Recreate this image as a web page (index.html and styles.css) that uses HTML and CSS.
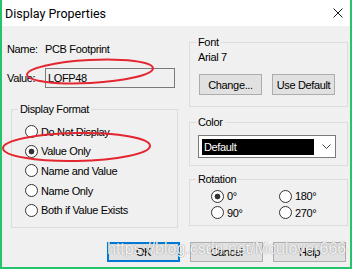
FILE: index.html
```html
<!DOCTYPE html>
<html>
<head>
<meta charset="utf-8">
<title>Display Properties</title>
<link rel="stylesheet" href="styles.css">
</head>
<body>
<div class="window">
  <div class="titlebar">
    <span class="title">Display Properties</span>
    <svg class="close" width="10" height="10" viewBox="0 0 10 10"><path d="M0.5 0.5 L9.5 9.5 M9.5 0.5 L0.5 9.5" stroke="#1a1a1a" stroke-width="1" fill="none"/></svg>
  </div>
  <div class="content">
    <div class="main">
      <div class="left">
        <div class="row name-row"><span class="lbl">Name:</span><span>PCB Footprint</span></div>
        <div class="row value-row"><span class="lbl">Value:</span><div class="input">LQFP48</div></div>
        <fieldset class="group format">
          <legend>Display Format</legend>
          <div class="radios">
            <div class="opt"><span class="radio"></span><span>Do Not Display</span></div>
            <div class="opt"><span class="radio on"></span><span>Value Only</span></div>
            <div class="opt"><span class="radio"></span><span>Name and Value</span></div>
            <div class="opt"><span class="radio"></span><span>Name Only</span></div>
            <div class="opt"><span class="radio"></span><span>Both if Value Exists</span></div>
          </div>
        </fieldset>
      </div>
      <div class="right">
        <fieldset class="group font">
          <legend>Font</legend>
          <div class="font-name">Arial 7</div>
          <div class="font-btns"><button class="btn small">Change...</button><button class="btn small">Use Default</button></div>
        </fieldset>
        <fieldset class="group color">
          <legend>Color</legend>
          <div class="combo"><span class="sel">Default</span><svg class="chev" width="9" height="5" viewBox="0 0 9 5"><path d="M0.5 0.5 L4.5 4.5 L8.5 0.5" stroke="#444" stroke-width="1" fill="none"/></svg></div>
        </fieldset>
        <fieldset class="group rotation">
          <legend>Rotation</legend>
          <div class="rot-grid">
            <div class="opt"><span class="radio on"></span><span>0°</span></div>
            <div class="opt"><span class="radio"></span><span>180°</span></div>
            <div class="opt"><span class="radio"></span><span>90°</span></div>
            <div class="opt"><span class="radio"></span><span>270°</span></div>
          </div>
        </fieldset>
      </div>
    </div>
    <div class="buttons">
      <button class="btn dlg focus">OK</button>
      <button class="btn dlg">Cancel</button>
      <button class="btn dlg">Help</button>
    </div>
  </div>
  <div class="watermark">https://blog.csdn.net/Mculover666</div>
  <svg class="marks" width="353" height="269" viewBox="0 0 353 269">
    <ellipse cx="90" cy="71.5" rx="63" ry="11.5" transform="rotate(-3 90 71.5)" fill="none" stroke="#e42631" stroke-width="2"/>
    <ellipse cx="76.5" cy="147" rx="73.5" ry="14" transform="rotate(-1 76.5 147)" fill="none" stroke="#e42631" stroke-width="2"/>
  </svg>
</div>
</body>
</html>
```
FILE: styles.css
```css
* { box-sizing: border-box; }
html, body { margin: 0; padding: 0; background: #fff; }
body {
  width: 353px;
  height: 269px;
  overflow: hidden;
  font-family: "Liberation Sans", Arial, sans-serif;
  font-size: 11px;
  letter-spacing: -0.35px;
  color: #000;
}
.window {
  position: relative;
  width: 352px;
  height: 269px;
  background: #f0f0f0;
  border-left: 2px solid #23c46c;
  border-right: 2px solid #23c46c;
  border-bottom: 2px solid #23c46c;
  display: flex;
  flex-direction: column;
}
.titlebar {
  height: 26px;
  flex: none;
  background: #fff;
  display: flex;
  align-items: center;
  padding-left: 3px;
  padding-right: 7px;
}
.title {
  font-family: Roboto, "Noto Sans", sans-serif;
  font-size: 12.5px;
  letter-spacing: 0;
  flex: 1;
}
.close { display: block; }
.content { flex: 1; display: flex; flex-direction: column; }
.main { display: flex; padding-left: 5px; gap: 11px; }
.left { width: 171px; padding-top: 16px; display: flex; flex-direction: column; }
.right { width: 159px; padding-top: 9px; display: flex; flex-direction: column; }
.row { display: flex; align-items: center; line-height: 14px; }
.name-row { height: 14px; }
.value-row { height: 20px; margin-top: 12px; }
.lbl { width: 38px; flex: none; }
.input {
  width: 130px;
  height: 20px;
  border: 1px solid #7a7a7a;
  background: #f0f0f0;
  padding-left: 2px;
  line-height: 18px;
}
.group {
  margin: 0;
  padding: 0;
  border: 1px solid #dcdcdc;
  min-width: 0;
}
.group legend {
  padding: 0 2px;
  margin-left: 6px;
  line-height: 14px;
}
.format { margin-top: 14px; margin-left: 4px; width: 167px; height: 126px; }
.radios { padding: 6px 0 0 13px; }
.opt { display: flex; align-items: center; height: 19.6px; line-height: 14px; white-space: nowrap; }
.radio {
  width: 13px;
  height: 13px;
  flex: none;
  border: 1px solid #333;
  border-radius: 50%;
  background: #fff;
  margin-right: 3px;
}
.radio.on { background: radial-gradient(circle, #333 0 2.6px, #fff 3.2px); }
.font { height: 72px; }
.font-name { padding: 1px 0 0 8px; line-height: 14px; }
.font-btns { display: flex; gap: 10px; padding-left: 9px; margin-top: 10px; }
.btn {
  font-family: inherit;
  font-size: 11px;
  letter-spacing: -0.35px;
  color: #000;
  background: #e1e1e1;
  border: 1px solid #adadad;
  padding: 0;
  margin: 0;
  line-height: 14px;
  white-space: nowrap;
}
.btn.small { width: 63px; height: 21px; }
.color { margin-top: 8px; height: 51px; }
.combo {
  margin: 6px 0 0 8px;
  width: 138px;
  height: 23px;
  border: 1px solid #7a7a7a;
  background: #fff;
  padding: 3px;
  display: flex;
  align-items: center;
}
.sel {
  width: 112px;
  height: 16px;
  background: #000;
  color: #fff;
  padding-left: 2px;
  line-height: 16px;
}
.chev { margin-left: 8px; }
.rotation { margin-top: 6px; height: 54px; }
.rot-grid {
  display: grid;
  grid-template-columns: 68px 68px;
  grid-auto-rows: 16.5px;
  padding: 2px 0 0 21px;
}
.rot-grid .opt { height: 16.5px; }
.buttons {
  display: flex;
  justify-content: flex-end;
  gap: 10px;
  padding-right: 4px;
  margin-top: 14px;
}
.btn.dlg { width: 73px; height: 20px; }
.btn.focus { border: 2px solid #0078d7; }
.watermark {
  position: absolute;
  left: 105px;
  top: 240px;
  font-family: "Liberation Sans", Arial, sans-serif;
  font-size: 16px;
  letter-spacing: 0;
  line-height: 18px;
  color: rgba(255, 255, 255, 0.92);
  text-shadow: 0 0 1px rgba(0, 0, 0, 0.35), 0 0 2px rgba(0, 0, 0, 0.15);
  pointer-events: none;
  white-space: nowrap;
}
.marks { position: absolute; left: -2px; top: 0; pointer-events: none; }
```
